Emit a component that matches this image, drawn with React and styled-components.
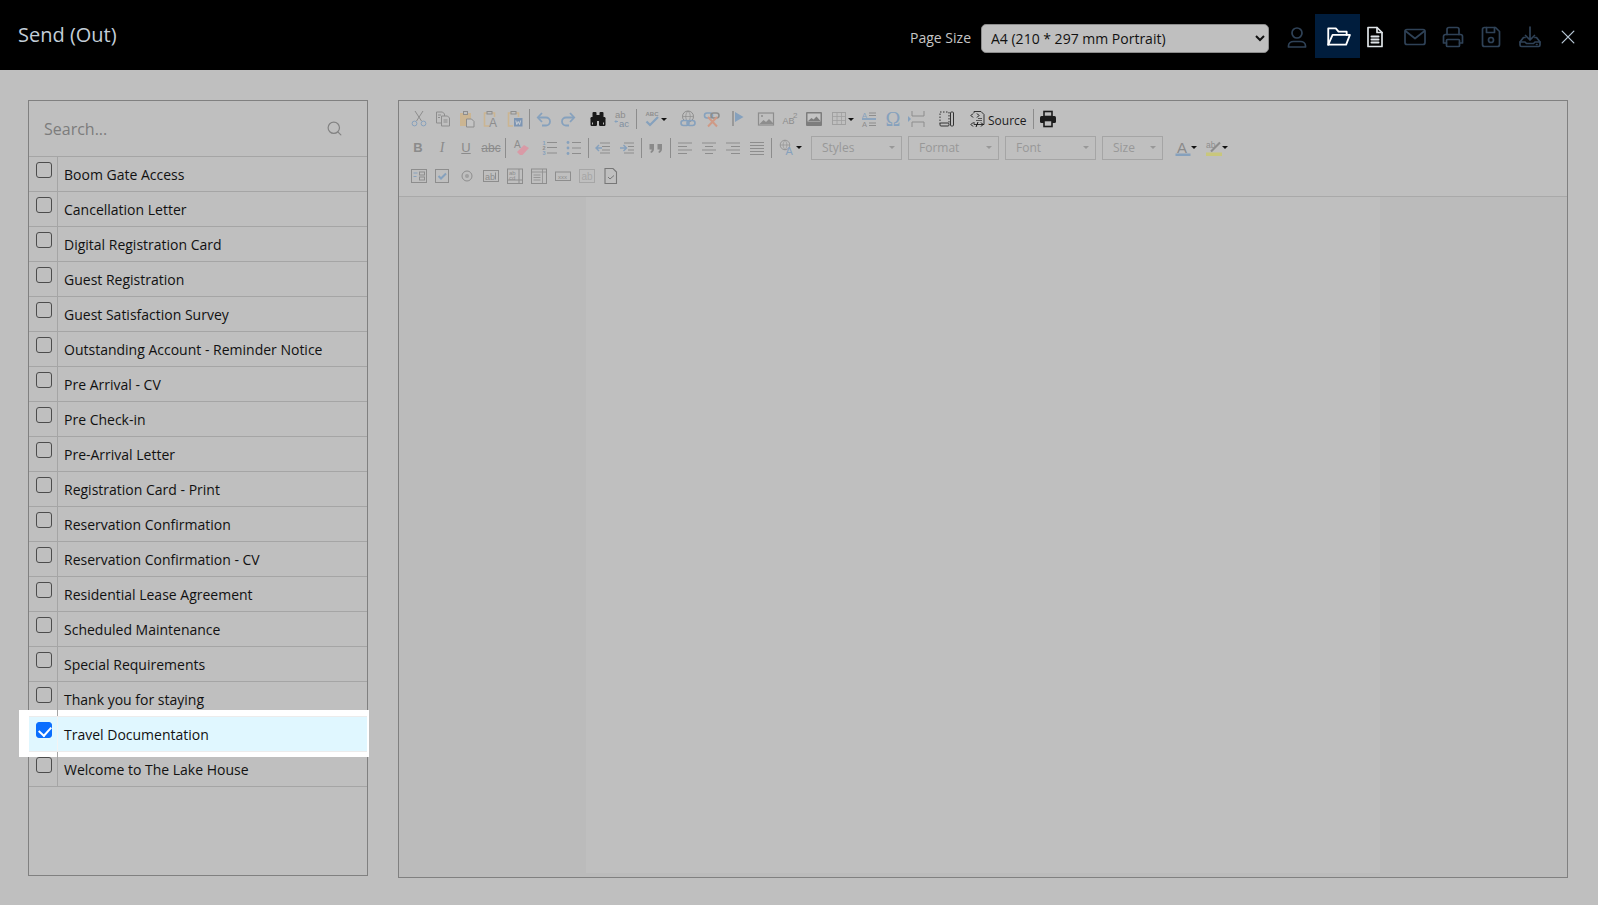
import React from "react";
import styled, { createGlobalStyle } from "styled-components";
import { Search } from "lucide-react";

const GlobalStyle = createGlobalStyle`
  html, body {
    margin: 0;
    padding: 0;
    height: 100%;
    background: #bfbfbf;
    font-family: "Open Sans", "Noto Sans", sans-serif;
  }
  * { box-sizing: border-box; }
`;

const Page = styled.div`
  width: 1598px;
  height: 905px;
  overflow: hidden;
  background: #bfbfbf;
`;

const Header = styled.header`
  height: 70px;
  background: #000;
  display: flex;
  align-items: center;
  padding: 0 8px 0 18px;
`;

const Title = styled.h1`
  margin: -2px auto 0 0;
  font-size: 20px;
  font-weight: 400;
  color: #c3ced8;
`;

const PageLabel = styled.label`
  font-size: 14px;
  color: #c6c6c6;
  margin: 5px 10px 0 0;
`;

const PageSelect = styled.select`
  width: 288px;
  height: 29px;
  margin: 7px 9px 0 0;
  padding-left: 5px;
  border: 1px solid #8c8c8c;
  border-radius: 5px;
  background-color: #bfbfbf;
  color: #111;
  font-family: inherit;
  font-size: 14px;
`;

const HeadButton = styled.button`
  width: ${(p) => p.$w}px;
  height: 44px;
  margin-top: 2px;
  padding: ${(p) => (p.$active ? 0 : "2px 0 0")};
  border: 0;
  display: flex;
  align-items: center;
  justify-content: center;
  background: ${(p) => (p.$active ? "#001d3d" : "transparent")};
  color: ${(p) => p.$color || "#2f4257"};
`;

const Body = styled.main`
  display: flex;
  align-items: flex-start;
  gap: 30px;
  padding: 30px 30px 0 28px;
`;

const ListPanel = styled.section`
  width: 340px;
  height: 776px;
  border: 1px solid #808080;
  display: flex;
  flex-direction: column;
`;

const SearchRow = styled.div`
  height: 56px;
  flex: none;
  display: flex;
  align-items: center;
  padding: 0 24px 0 15px;
  border-bottom: 1px solid #a5a5a5;
  color: #838383;
`;

const SearchInput = styled.input`
  flex: 1;
  min-width: 0;
  padding: 0;
  border: 0;
  outline: 0;
  background: transparent;
  font-family: inherit;
  font-size: 16px;
  &::placeholder { color: #7c7c7c; opacity: 1; }
`;

const Row = styled.label`
  position: relative;
  height: 35px;
  flex: none;
  display: flex;
  border-bottom: 1px solid #a5a5a5;
  ${(p) =>
    p.$selected &&
    `&::before {
      content: "";
      position: absolute;
      z-index: 0;
      top: -7px;
      bottom: -6px;
      left: -10px;
      right: -2px;
      background: #fff;
    }
    &::after {
      content: "";
      position: absolute;
      z-index: 0;
      inset: -1px 0 -1px 0;
      border-top: 1px solid #ececec;
      border-bottom: 1px solid #ececec;
      background: #e0f7ff;
    }`}
`;

const CheckCell = styled.span`
  position: relative;
  z-index: 1;
  width: 29px;
  flex: none;
  border-right: 1px solid ${(p) => (p.$selected ? "#f3f3f3" : "#a5a5a5")};
  padding: 5px 0 0 7px;
`;

const Check = styled.input`
  appearance: none;
  display: block;
  position: relative;
  width: 16px;
  height: 16px;
  margin: 0;
  border: 1px solid #4c4c4c;
  border-radius: 3px;
  background: transparent;
  &:checked {
    border-color: #0b6efe;
    background: #0b6efe;
  }
  &:checked::after {
    content: "";
    position: absolute;
    left: 4px;
    top: 0.5px;
    width: 6px;
    height: 10px;
    border: solid #fff;
    border-width: 0 2.5px 2.5px 0;
    transform: rotate(42deg);
  }
`;

const RowText = styled.span`
  position: relative;
  z-index: 1;
  padding: 8px 0 0 6px;
  font-size: 14px;
  line-height: 20px;
  color: #111;
`;

const EditorPanel = styled.section`
  width: 1170px;
  height: 778px;
  border: 1px solid #808080;
  display: flex;
  flex-direction: column;
`;

const Toolbar = styled.div`
  height: 96px;
  flex: none;
  padding: 4px 0 0 8px;
  border-bottom: 1px solid #a9a9a9;
`;

const ToolRow = styled.div`
  height: 28.5px;
  display: flex;
  align-items: center;
`;

const Slot = styled.span`
  width: ${(p) => p.$w || 24}px;
  margin-left: ${(p) => p.$ml || 0}px;
  height: 20px;
  flex: none;
  display: flex;
  align-items: center;
  justify-content: ${(p) => (p.$w ? "flex-start" : "center")};
  padding-left: ${(p) => (p.$w ? 5 : 0)}px;
`;

const Sep = styled.span`
  width: 5px;
  height: 20px;
  flex: none;
  display: flex;
  justify-content: center;
  &::before {
    content: "";
    width: 1px;
    background: #8c8c8c;
  }
`;

const Arrow = styled.span`
  width: 0;
  height: 0;
  margin-left: -1px;
  border-left: 3px solid transparent;
  border-right: 3px solid transparent;
  border-top: 3px solid #111;
`;

const Combo = styled.span`
  width: ${(p) => p.$w}px;
  height: 24px;
  margin-left: ${(p) => p.$ml}px;
  flex: none;
  display: flex;
  align-items: center;
  justify-content: space-between;
  padding: 0 6px 0 10px;
  border: 1px solid #a5a5a5;
  font-size: 12px;
  color: #989898;
  &::after {
    content: "";
    border-left: 3px solid transparent;
    border-right: 3px solid transparent;
    border-top: 3px solid #989898;
  }
`;

const SourceLabel = styled.span`
  font-size: 12px;
  margin-top: 2px;
  color: #1c1c1c;
`;

const Glyph = styled.span`
  font-family: ${(p) => (p.$serif ? '"Liberation Serif"' : '"Liberation Sans"')}, sans-serif;
  font-size: ${(p) => p.$size || 13}px;
  font-weight: ${(p) => (p.$bold ? 700 : 400)};
  font-style: ${(p) => (p.$italic ? "italic" : "normal")};
  text-decoration: ${(p) => p.$line || "none"};
  color: ${(p) => p.$color || "#8b8b8b"};
`;

const EditArea = styled.div`
  flex: 1;
  display: flex;
  justify-content: center;
  padding-bottom: 4px;
  background: #bbbbbb;
`;

const Sheet = styled.div`
  width: 794px;
  background: #bfbfbf;
`;

const HeadSvg = ({ w = 24, h = 24, sw = 1.7, children }) => (
  <svg width={w} height={h} viewBox="0 0 24 24" fill="none" stroke="currentColor" strokeWidth={sw} strokeLinecap="round" strokeLinejoin="round">
    {children}
  </svg>
);

const G = "#8d8d8d";
const B = "#86a1bd";
const T = "#cbb592";

const Ico = ({ children, w = 18 }) => (
  <svg width={w} height="18" viewBox={`0 0 ${w} 18`} fill="none" stroke={G} strokeWidth="1">
    {children}
  </svg>
);

const Lines = ({ rows }) => rows.map(([x1, x2, y], i) => <line key={i} x1={x1} x2={x2} y1={y} y2={y} />);

const Icons = {
  cut: (
    <Ico>
      <path d="M5 1l6.5 10M13 1L6.500 11" />
      <circle cx="4.500" cy="13.500" r="2.400" stroke={B} />
      <circle cx="13.500" cy="13.500" r="2.400" stroke={B} />
    </Ico>
  ),
  copy: (
    <Ico>
      <path d="M2.500 2h6l2 2v9h-8z" />
      <path d="M7.500 6h6l2 2v8h-8z" fill="#bfbfbf" />
      <path d="M9.500 10h4M9.500 12h4M4 5h3M4 7.500h2" />
    </Ico>
  ),
  paste: (
    <Ico>
      <rect x="2" y="3" width="11" height="13" fill={T} stroke="none" />
      <rect x="5.500" y="1.500" width="4" height="3" fill="#bfbfbf" stroke={G} />
      <path d="M8.500 9h5l2.500 2.500V17H8.500z" fill="#c4c4c4" />
    </Ico>
  ),
  pasteText: (
    <Ico>
      <path d="M5 3H2.500v13H7M10 3h2.500v4" stroke={T} strokeWidth="1.600" />
      <rect x="5" y="1.500" width="5" height="2.500" fill="#bfbfbf" stroke={G} />
      <text x="7" y="16.500" fontSize="12" fontFamily="Liberation Sans" fill={G} stroke="none">A</text>
    </Ico>
  ),
  pasteWord: (
    <Ico>
      <path d="M5 3H2.500v13H7M10 3h2.500v4" stroke={T} strokeWidth="1.600" />
      <rect x="5" y="1.500" width="5" height="2.500" fill="#bfbfbf" stroke={G} />
      <rect x="8" y="8" width="8.500" height="8.500" fill="#7d95b3" stroke="none" />
      <path d="M9.800 10.500l1 4 1.400-3 1.400 3 1-4" stroke="#d9d9d9" strokeWidth=".8" />
    </Ico>
  ),
  undo: (
    <Ico>
      <path d="M3 7.500h8a4 4 0 0 1 0 8H7" stroke={B} strokeWidth="1.800" />
      <path d="M7 3L2.800 7.500 7 12" stroke={B} strokeWidth="1.800" />
    </Ico>
  ),
  redo: (
    <Ico>
      <path d="M15 7.500H7a4 4 0 0 0 0 8h3" stroke={B} strokeWidth="1.800" />
      <path d="M11 3l4.200 4.500L11 12" stroke={B} strokeWidth="1.800" />
    </Ico>
  ),
  find: (
    <Ico>
      <g fill="#1a1a1a" stroke="none">
        <rect x="3.500" y="2" width="4" height="6" rx="1" />
        <rect x="10.500" y="2" width="4" height="6" rx="1" />
        <rect x="1.500" y="7" width="6.500" height="9" rx="1.200" />
        <rect x="10" y="7" width="6.500" height="9" rx="1.200" />
        <rect x="7" y="5" width="4" height="6" />
      </g>
      <path d="M3.500 12.500v2M14.500 12.500v2" stroke="#bfbfbf" />
    </Ico>
  ),
  replace: (
    <Ico>
      <text x="2" y="8" fontSize="9.500" fontFamily="Liberation Sans" fill={G} stroke="none">ab</text>
      <text x="6" y="16.500" fontSize="9.500" fontFamily="Liberation Sans" fill="#7f8f9f" stroke="none">ac</text>
      <path d="M5 11.500H2l1.200-1.300M2 11.500l1.200 1.300" stroke={B} />
    </Ico>
  ),
  spell: (
    <Ico>
      <text x="1.500" y="6" fontSize="6" fontFamily="Liberation Sans" fontWeight="700" fill={G} stroke="none">ABC</text>
      <path d="M2.500 11.500l3.500 3.500 8-8" stroke={B} strokeWidth="2.200" />
    </Ico>
  ),
  link: (
    <Ico>
      <circle cx="9" cy="6.500" r="5.500" />
      <path d="M3.500 6.500h11M9 1c-3 3-3 8 0 11M9 1c3 3 3 8 0 11" strokeWidth=".7" />
      <rect x="2" y="10.500" width="8" height="5" rx="2.500" stroke={B} strokeWidth="1.600" fill="#bfbfbf" />
      <rect x="8" y="10.500" width="8" height="5" rx="2.500" stroke={B} strokeWidth="1.600" />
    </Ico>
  ),
  unlink: (
    <Ico>
      <rect x="1.500" y="3" width="8" height="5" rx="2.500" stroke={B} strokeWidth="1.600" />
      <rect x="8" y="3" width="8" height="5" rx="2.500" stroke={G} strokeWidth="1.600" />
      <path d="M5 7l9 9.500M14 7l-9 9.500" stroke="#cf9a86" strokeWidth="2" />
    </Ico>
  ),
  anchor: (
    <Ico>
      <path d="M4 1v15" strokeWidth="1.500" />
      <path d="M6 2l8.500 5L6 12z" fill={B} stroke="none" />
    </Ico>
  ),
  image: (
    <Ico>
      <rect x="1.500" y="3" width="15" height="12" strokeWidth="1.200" />
      <path d="M2.500 14l4-4 2.500 2 3-3 4 4v1z" fill={G} stroke="none" />
      <circle cx="5" cy="6" r="1" fill={G} stroke="none" />
    </Ico>
  ),
  sup: (
    <Ico>
      <text x="1.500" y="14" fontSize="9" fontFamily="Liberation Sans" fill={G} stroke="none">AB</text>
      <text x="12" y="8" fontSize="8" fontFamily="Liberation Sans" fill={G} stroke="none">2</text>
    </Ico>
  ),
  imageDark: (
    <Ico>
      <rect x="1" y="2" width="16" height="14" rx="1" fill="#7d7d7d" stroke="none" />
      <rect x="2.500" y="3.500" width="13" height="8" fill="#c4c4c4" stroke="none" />
      <path d="M3 11l3.500-3 2 1.500 3-3 4 4.500z" fill="#7d7d7d" stroke="none" />
    </Ico>
  ),
  table: (
    <Ico>
      <rect x="1.500" y="2.500" width="13" height="12" stroke="#a0a0a0" />
      <path d="M1.500 6.500h13M1.500 10.500h13M6 2.500v12M10.500 2.500v12" strokeWidth=".8" stroke="#a0a0a0" />
    </Ico>
  ),
  hr: (
    <Ico>
      <text x="2" y="7.500" fontSize="7.500" fontFamily="Liberation Sans" fill={B} stroke="none">A</text>
      <text x="2" y="16.500" fontSize="7.500" fontFamily="Liberation Sans" fill={G} stroke="none">A</text>
      <path d="M2 9h14" stroke={B} strokeWidth="1.800" />
      <path d="M9 3h7M9 5.500h7M9 13h7M9 15.500h7" />
    </Ico>
  ),
  pagebreak: (
    <Ico>
      <path d="M4 1v5h12V1M4 17v-5h12v5" />
      <path d="M0 6l3 3-3 3z" fill={B} stroke="none" />
    </Ico>
  ),
  preview: (
    <Ico>
      <path d="M2 2h9v12H2z" stroke="#333" strokeDasharray="1.500 1.500" />
      <rect x="12.500" y="2" width="3" height="14" rx="1" stroke="#333" />
      <rect x="2" y="13" width="9" height="3" rx="1" stroke="#333" fill="#bfbfbf" />
    </Ico>
  ),
  source: (
    <Ico>
      <path d="M4 3V1.500h7l3 3v10H4V12" stroke="#333" />
      <path d="M3 3.500L1 5.500l2 2M7 3.500l2 2-2 2M3 12.500l-2 2 2 2M11 12.500l2 2-2 2M8 12l-2 5" stroke="#111" />
      <path d="M8 8.500h4M6 10.500h6" stroke="#555" />
    </Ico>
  ),
  print: (
    <Ico>
      <rect x="5" y="1.500" width="8" height="5" fill="#bfbfbf" stroke="#1c1c1c" strokeWidth="1.600" />
      <rect x="1" y="6" width="16" height="7" rx="1.500" fill="#1c1c1c" stroke="none" />
      <rect x="5" y="10.500" width="8" height="6" fill="#bfbfbf" stroke="#1c1c1c" strokeWidth="1.600" />
    </Ico>
  ),
  eraser: (
    <Ico>
      <text x="1" y="9" fontSize="10" fontFamily="Liberation Sans" fill={G} stroke="none">A</text>
      <path d="M4 13l7-7 5 3-6.500 7H7z" fill="#d99aa6" stroke="none" />
    </Ico>
  ),
  ol: (
    <Ico>
      <text x="1.500" y="6" fontSize="5.500" fontFamily="Liberation Sans" fontWeight="700" fill={B} stroke="none">1</text>
      <text x="1.500" y="11" fontSize="5.500" fontFamily="Liberation Sans" fontWeight="700" fill={G} stroke="none">2</text>
      <text x="1.500" y="16" fontSize="5.500" fontFamily="Liberation Sans" fontWeight="700" fill={B} stroke="none">3</text>
      <Lines rows={[[6, 16, 3.500], [6, 16, 8.500], [6, 16, 14]]} />
    </Ico>
  ),
  ul: (
    <Ico>
      <circle cx="3" cy="3.500" r="1.400" fill={B} stroke="none" />
      <circle cx="3" cy="9" r="1.400" fill={B} stroke="none" />
      <circle cx="3" cy="14.500" r="1.400" fill={B} stroke="none" />
      <Lines rows={[[7, 16, 3.500], [7, 16, 9], [7, 16, 14.500]]} />
    </Ico>
  ),
  outdent: (
    <Ico>
      <Lines rows={[[6, 16, 4], [8, 16, 7.500], [8, 16, 11], [6, 16, 14]]} />
      <path d="M8 9H2M5 6L2 9l3 3" stroke={B} strokeWidth="1.400" />
    </Ico>
  ),
  indent: (
    <Ico>
      <Lines rows={[[6, 16, 4], [10, 16, 7.500], [10, 16, 11], [6, 16, 14]]} />
      <path d="M2 9h6M5.500 6l3 3-3 3" stroke={B} strokeWidth="1.400" />
    </Ico>
  ),
  quote: (
    <Ico>
      <path d="M2.500 5h4.500v5c0 2-1.300 3.500-3 4l-.7-1.200c1-.5 1.400-1.300 1.400-2.300H2.500zM10.500 5H15v5c0 2-1.300 3.500-3 4l-.7-1.200c1-.5 1.400-1.300 1.400-2.300h-2.200z" fill="#8a8a8a" stroke="none" />
    </Ico>
  ),
  left: <Ico><Lines rows={[[2, 16, 4], [2, 11, 7.500], [2, 16, 11], [2, 11, 14.500]]} /></Ico>,
  center: <Ico><Lines rows={[[2, 16, 4], [5, 13, 7.500], [2, 16, 11], [5, 13, 14.500]]} /></Ico>,
  right: <Ico><Lines rows={[[2, 16, 4], [7, 16, 7.500], [2, 16, 11], [7, 16, 14.500]]} /></Ico>,
  justify: <Ico><Lines rows={[[2, 16, 3.500], [2, 16, 6.500], [2, 16, 9.500], [2, 16, 12.500], [2, 16, 15.500]]} /></Ico>,
  lang: (
    <Ico>
      <circle cx="6" cy="6" r="4.800" strokeWidth=".8" />
      <path d="M1.200 6h9.600M6 1.200c-2.500 3-2.500 6.600 0 9.600M6 1.200c2.500 3 2.500 6.600 0 9.600" strokeWidth=".6" />
      <text x="6.500" y="16" fontSize="11" fontFamily="Liberation Sans" fill={B} stroke="none">A</text>
    </Ico>
  ),
  textColor: (
    <Ico>
      <text x="3" y="13.500" fontSize="15" fontFamily="Liberation Sans" fill="#8a8a8a" stroke="none">A</text>
      <rect x="1.500" y="14.500" width="15" height="2.500" fill={B} stroke="none" />
    </Ico>
  ),
  bgColor: (
    <Ico>
      <text x="1" y="8.500" fontSize="8.500" fontFamily="Liberation Sans" fill={G} stroke="none">ab</text>
      <path d="M6 12.500l9-9" stroke={G} strokeWidth="2.200" />
      <rect x="1" y="13.500" width="16" height="3.500" fill="#c9c77c" stroke="none" />
    </Ico>
  ),
  form: (
    <Ico>
      <rect x="1.500" y="2.500" width="15" height="13" />
      <path d="M3.500 6h4M3.500 9.500h3" stroke={B} />
      <rect x="9.500" y="5" width="5" height="3" />
      <rect x="9.500" y="10" width="5" height="3" />
    </Ico>
  ),
  checkbox: (
    <Ico>
      <rect x="1.500" y="2.500" width="13" height="13" />
      <path d="M4.500 9l2.500 2.500 5-5" stroke={B} strokeWidth="2" />
    </Ico>
  ),
  radio: (
    <Ico>
      <circle cx="9" cy="9" r="5" />
      <circle cx="9" cy="9" r="2" fill="#a0a0a0" stroke="none" />
    </Ico>
  ),
  textfield: (
    <Ico>
      <rect x="1.500" y="3.500" width="15" height="11" />
      <text x="3" y="12.500" fontSize="9" fontFamily="Liberation Sans" fill={G} stroke="none">ab</text>
      <path d="M13.500 5.500v7" />
    </Ico>
  ),
  textarea: (
    <Ico>
      <rect x="1.500" y="2" width="15" height="14.500" />
      <text x="3" y="8" fontSize="6" fontFamily="Liberation Sans" fill={G} stroke="none">ab</text>
      <text x="3" y="12.500" fontSize="6" fontFamily="Liberation Sans" fill={G} stroke="none">cd</text>
      <path d="M13 2v14.500M1.500 13h15" />
    </Ico>
  ),
  select: (
    <Ico>
      <rect x="1.500" y="2" width="15" height="14.500" />
      <path d="M1.500 5h15M12.500 2v14.500M3.500 8h7M3.500 10.500h7M3.500 13h7" strokeWidth=".8" />
    </Ico>
  ),
  button: (
    <Ico>
      <rect x="1.500" y="5" width="15" height="8.500" />
      <text x="4" y="11.500" fontSize="6" fontFamily="Liberation Sans" fill={G} stroke="none">xxx</text>
    </Ico>
  ),
  imageButton: (
    <Ico>
      <rect x="1.500" y="2.500" width="15" height="13" stroke="#a6a6a6" />
      <text x="3.500" y="12.500" fontSize="10" fontFamily="Liberation Sans" fill="#a6a6a6" stroke="none">ab</text>
    </Ico>
  ),
  docCheck: (
    <Ico>
      <path d="M3 1.500h8l3.500 3.500v11.500H3z" strokeWidth="1.100" stroke="#777" />
      <path d="M6 10l2 2 4-3.500" stroke="#777" />
    </Ico>
  ),
};

const rows = [
  "Boom Gate Access",
  "Cancellation Letter",
  "Digital Registration Card",
  "Guest Registration",
  "Guest Satisfaction Survey",
  "Outstanding Account - Reminder Notice",
  "Pre Arrival - CV",
  "Pre Check-in",
  "Pre-Arrival Letter",
  "Registration Card - Print",
  "Reservation Confirmation",
  "Reservation Confirmation - CV",
  "Residential Lease Agreement",
  "Scheduled Maintenance",
  "Special Requirements",
  "Thank you for staying",
  "Travel Documentation",
  "Welcome to The Lake House",
];

const App = () => (
  <Page>
    <GlobalStyle />
    <Header>
      <Title>Send (Out)</Title>
      <PageLabel htmlFor="page-size">Page Size</PageLabel>
      <PageSelect id="page-size" defaultValue="a4">
        <option value="a4">A4 (210 * 297 mm Portrait)</option>
      </PageSelect>
      <HeadButton $w={37}>
        <HeadSvg>
          <circle cx="12" cy="8" r="5" />
          <path d="M3.500 22v-1c0-3 2.500-4.500 5-4.500h7c2.500 0 5 1.500 5 4.500v1z" />
        </HeadSvg>
      </HeadButton>
      <HeadButton $w={45} $active $color="#fff">
        <HeadSvg w={26} h={26}>
          <path d="M3 20V5h7l2.500 3H20v3" />
          <path d="M3 20l4-9h16l-3.500 9z" />
        </HeadSvg>
      </HeadButton>
      <HeadButton $w={30} $color="#dfe4e8">
        <HeadSvg>
          <path d="M5 2.500h9l5 5v14H5z" />
          <path d="M14 2.500v5h5" />
          <path d="M8.500 11.500h7M8.500 14.500h7M8.500 17.500h7" strokeWidth="2" />
        </HeadSvg>
      </HeadButton>
      <HeadButton $w={50}>
        <HeadSvg>
          <rect x="2" y="4.500" width="20" height="15" rx="2" />
          <path d="M2.500 6l9.500 7.500L21.500 6" />
        </HeadSvg>
      </HeadButton>
      <HeadButton $w={26}>
        <HeadSvg>
          <path d="M6 9.500V4.500a2 2 0 0 1 2-2h8a2 2 0 0 1 2 2v5" />
          <path d="M5.500 18H2.500v-6.500a2 2 0 0 1 2-2h15a2 2 0 0 1 2 2V18h-3" />
          <rect x="5.500" y="14.500" width="13" height="7" rx="1" />
        </HeadSvg>
      </HeadButton>
      <HeadButton $w={49}>
        <HeadSvg>
          <path d="M3.500 4.500a2 2 0 0 1 2-2h11l4 4v13a2 2 0 0 1-2 2h-13a2 2 0 0 1-2-2z" />
          <path d="M7.500 2.500v5h8v-5" />
          <circle cx="12" cy="15" r="2.500" />
        </HeadSvg>
      </HeadButton>
      <HeadButton $w={30}>
        <HeadSvg>
          <path d="M12 2v13M7.500 10.500L12 15l4.500-4.500" />
          <path d="M7 12.500H5.500L2 17v3a1.500 1.500 0 0 0 1.500 1.500h17A1.500 1.500 0 0 0 22 20v-3l-3.500-4.500H17" />
          <path d="M2 17h5l1.500 1.500h7L17 17h5" />
          <path d="M18.500 19.500h.5" />
        </HeadSvg>
      </HeadButton>
      <HeadButton $w={45} $color="#b8c8d6">
        <HeadSvg w={20} h={20} sw={1.5}>
          <path d="M5 5l14 14M19 5L5 19" />
        </HeadSvg>
      </HeadButton>
    </Header>
    <Body>
      <ListPanel>
        <SearchRow>
          <SearchInput placeholder="Search..." />
          <Search size={17} strokeWidth={1.7} />
        </SearchRow>
        {rows.map((name) => {
          const selected = name === "Travel Documentation";
          return (
            <Row key={name} $selected={selected}>
              <CheckCell $selected={selected}>
                <Check type="checkbox" defaultChecked={selected} />
              </CheckCell>
              <RowText>{name}</RowText>
            </Row>
          );
        })}
      </ListPanel>
      <EditorPanel>
        <Toolbar>
          <ToolRow>
            <Slot>{Icons.cut}</Slot>
            <Slot>{Icons.copy}</Slot>
            <Slot>{Icons.paste}</Slot>
            <Slot>{Icons.pasteText}</Slot>
            <Slot>{Icons.pasteWord}</Slot>
            <Sep />
            <Slot>{Icons.undo}</Slot>
            <Slot>{Icons.redo}</Slot>
            <Slot $ml={6}>{Icons.find}</Slot>
            <Slot>{Icons.replace}</Slot>
            <Sep />
            <Slot $w={35}>{Icons.spell}<Arrow /></Slot>
            <Slot $ml={2}>{Icons.link}</Slot>
            <Slot>{Icons.unlink}</Slot>
            <Slot $ml={2}>{Icons.anchor}</Slot>
            <Slot $ml={4}>{Icons.image}</Slot>
            <Slot>{Icons.sup}</Slot>
            <Slot>{Icons.imageDark}</Slot>
            <Slot $w={31}>{Icons.table}<Arrow /></Slot>
            <Slot>{Icons.hr}</Slot>
            <Slot><Glyph $serif $size={20} $color={B}>Ω</Glyph></Slot>
            <Slot>{Icons.pagebreak}</Slot>
            <Slot $ml={6}>{Icons.preview}</Slot>
            <Slot $w={66} $ml={6}>{Icons.source}<SourceLabel>Source</SourceLabel></Slot>
            <Sep />
            <Slot>{Icons.print}</Slot>
          </ToolRow>
          <ToolRow>
            <Slot $ml={-1}><Glyph $bold>B</Glyph></Slot>
            <Slot><Glyph $italic $serif $size={14}>I</Glyph></Slot>
            <Slot><Glyph $line="underline">U</Glyph></Slot>
            <Slot $ml={1}><Glyph $line="line-through" $size={12}>abc</Glyph></Slot>
            <Sep />
            <Slot $ml={2}>{Icons.eraser}</Slot>
            <Slot $ml={4}>{Icons.ol}</Slot>
            <Slot>{Icons.ul}</Slot>
            <Sep />
            <Slot>{Icons.outdent}</Slot>
            <Slot>{Icons.indent}</Slot>
            <Sep />
            <Slot>{Icons.quote}</Slot>
            <Sep />
            <Slot>{Icons.left}</Slot>
            <Slot>{Icons.center}</Slot>
            <Slot>{Icons.right}</Slot>
            <Slot>{Icons.justify}</Slot>
            <Sep />
            <Slot $w={32}>{Icons.lang}<Arrow /></Slot>
            <Combo $w={91} $ml={5}>Styles</Combo>
            <Combo $w={91} $ml={6}>Format</Combo>
            <Combo $w={91} $ml={6}>Font</Combo>
            <Combo $w={61} $ml={6}>Size</Combo>
            <Slot $w={31} $ml={6}>{Icons.textColor}<Arrow /></Slot>
            <Slot $w={31}>{Icons.bgColor}<Arrow /></Slot>
          </ToolRow>
          <ToolRow>
            <Slot>{Icons.form}</Slot>
            <Slot>{Icons.checkbox}</Slot>
            <Slot>{Icons.radio}</Slot>
            <Slot>{Icons.textfield}</Slot>
            <Slot>{Icons.textarea}</Slot>
            <Slot>{Icons.select}</Slot>
            <Slot>{Icons.button}</Slot>
            <Slot>{Icons.imageButton}</Slot>
            <Slot>{Icons.docCheck}</Slot>
          </ToolRow>
        </Toolbar>
        <EditArea>
          <Sheet />
        </EditArea>
      </EditorPanel>
    </Body>
  </Page>
);

export default App;
